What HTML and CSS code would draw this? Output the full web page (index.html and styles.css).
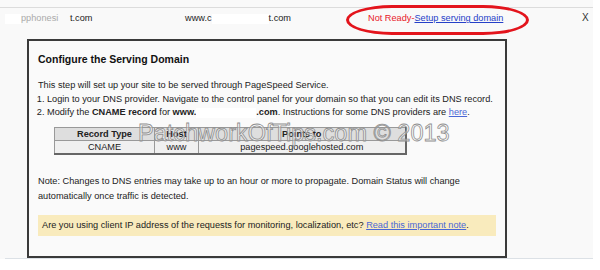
FILE: index.html
```html
<!DOCTYPE html>
<html>
  <head>
    <meta charset="UTF-8">
    <title>Configure the Serving Domain</title>
    <link rel="stylesheet" href="styles.css">
  </head>
  <body>
    <div class="panel">
      <div class="domain-row">
        <span class="cell cell-name"><span class="blot blot-name"></span><span class="ghost">pphonesi</span>t.com</span>
        <span class="cell cell-host">www.c<span class="blot blot-host"></span>t.com</span>
        <span class="cell cell-status"><span class="status-bad">Not Ready-</span><a href="#" class="link">Setup serving domain</a></span>
        <span class="close">X</span>
        <span class="circle"></span>
      </div>

      <div class="dialog">
        <h2 class="dialog-title">Configure the Serving Domain</h2>
        <p class="intro">This step will set up your site to be served through PageSpeed Service.</p>
        <ol class="steps">
          <li>Login to your DNS provider. Navigate to the control panel for your domain so that you can edit its DNS record.</li>
          <li>Modify the <b>CNAME record</b> for <b>www.<span class="blot blot-step"></span>.com</b>. Instructions for some DNS providers are <a href="#" class="link link-soft">here</a>.</li>
        </ol>

        <table class="records">
          <colgroup>
            <col class="col-type">
            <col class="col-host">
            <col class="col-points">
          </colgroup>
          <tr>
            <th>Record Type</th>
            <th>Host</th>
            <th>Points to</th>
          </tr>
          <tr>
            <td>CNAME</td>
            <td>www</td>
            <td>pagespeed.googlehosted.com</td>
          </tr>
        </table>

        <p class="note">Note: Changes to DNS entries may take up to an hour or more to propagate. Domain Status will change<br>automatically once traffic is detected.</p>

        <div class="tip">Are you using client IP address of the requests for monitoring, localization, etc? <a href="#" class="link link-soft">Read this important note</a>.</div>

        <span class="watermark">PatchworkOfTips.com © 2013</span>
      </div>
      <div class="footline"></div>
    </div>
  </body>
</html>
```

FILE: styles.css
```css
* { margin: 0; padding: 0; }
body { background: #fff; font-family: "Liberation Sans", Arial, sans-serif; color: #222; }

.panel { width: 593px; background: #f9f9f9; padding-top: 7px; }

/* domain status row */
.domain-row { position: relative; display: flex; height: 21px; line-height: 20px; border-top: 1px solid #dcdcdc; font-size: 9.2px; white-space: nowrap; }
.cell { display: block; }
.cell-name { width: 178px; margin-left: 7px; }
.cell-host { width: 183px; }
.cell-status { width: 205px; }
.close { margin-left: 9px; font-size: 10px; color: #333; }
.status-bad { color: #e8202a; }
.link { color: #2540c8; text-decoration: underline; }
.link-soft { color: #4a67d6; }

.blot { display: inline-block; height: 10px; vertical-align: middle; background: #fff; }
.blot-name { width: 16px; margin-left: -2px; }
.blot-host { width: 57px; }
.blot-step { width: 60px; }
.ghost { display: inline-block; width: 49px; color: #aaa; }

.circle { position: absolute; left: 346px; top: -3px; width: 183px; height: 30px; box-sizing: border-box; border: 3px solid #e3141c; border-radius: 46px / 15px; }

/* dialog */
.dialog { position: relative; box-sizing: border-box; width: 480px; height: 219px; margin: 10px 0 0 27px; padding: 11px 9px 0; border: 2px solid #3a3a3a; background: #fafafa; font-size: 9.2px; line-height: 13.5px; }
.dialog-title { font-size: 10.5px; line-height: 14px; font-weight: bold; color: #111; }
.intro { margin-top: 13px; }
.steps { padding-left: 9px; }
.steps li { white-space: nowrap; }

.records { margin: 7px 0 0 16px; width: 351px; table-layout: fixed; border-collapse: collapse; border: 1px solid #888; border-right: 2px solid #666; border-bottom: 2px solid #666; text-align: center; }
.col-type { width: 100px; }
.col-host { width: 44px; }
.col-points { width: 207px; }
.records th, .records td { height: 12px; line-height: 12px; padding: 0; border: 1px solid #999; }
.records th { background: #dedede; font-weight: bold; }
.records td { background: #f0f0f0; }

.note { margin-top: 19px; line-height: 15px; }
.tip { margin-top: 11.5px; height: 21px; line-height: 21px; padding: 0 4px; background: #f9ebbd; white-space: nowrap; }

.watermark { position: absolute; left: 109px; top: 80px; font-size: 23.5px; line-height: 24px; color: rgba(255,255,255,0.45); -webkit-text-stroke: 0.8px #8e8e8e; white-space: nowrap; }

.footline { height: 1px; margin-left: 5px; background: #dce1e6; }
```
